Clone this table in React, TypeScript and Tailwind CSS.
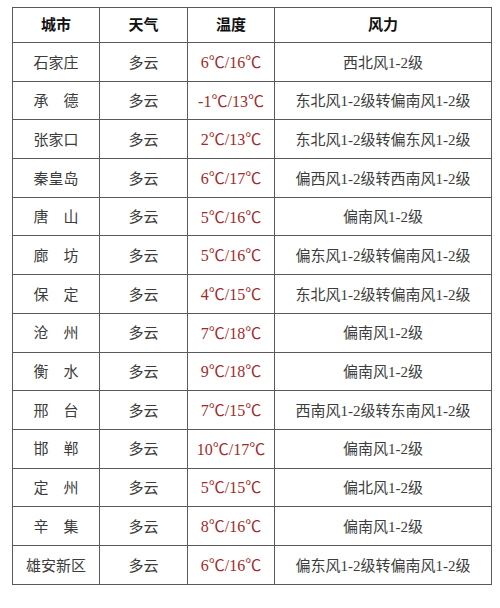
const rows = [
  ["石家庄", "6℃/16℃", "西北风1-2级"],
  ["承　德", "-1℃/13℃", "东北风1-2级转偏南风1-2级"],
  ["张家口", "2℃/13℃", "东北风1-2级转偏东风1-2级"],
  ["秦皇岛", "6℃/17℃", "偏西风1-2级转西南风1-2级"],
  ["唐　山", "5℃/16℃", "偏南风1-2级"],
  ["廊　坊", "5℃/16℃", "偏东风1-2级转偏南风1-2级"],
  ["保　定", "4℃/15℃", "东北风1-2级转偏南风1-2级"],
  ["沧　州", "7℃/18℃", "偏南风1-2级"],
  ["衡　水", "9℃/18℃", "偏南风1-2级"],
  ["邢　台", "7℃/15℃", "西南风1-2级转东南风1-2级"],
  ["邯　郸", "10℃/17℃", "偏南风1-2级"],
  ["定　州", "5℃/15℃", "偏北风1-2级"],
  ["辛　集", "8℃/16℃", "偏南风1-2级"],
  ["雄安新区", "6℃/16℃", "偏东风1-2级转偏南风1-2级"],
];

export default function App() {
  return (
    <div
      className="w-[500px] h-[608px] bg-white pt-[7px] pl-[12px]"
      style={{ fontFamily: '"Liberation Serif", "Noto Sans CJK SC", serif' }}
    >
      <table className="table-fixed border-collapse w-[479px] text-[15px] text-center">
        <colgroup>
          <col className="w-[87px]" />
          <col className="w-[88px]" />
          <col className="w-[87px]" />
          <col className="w-[217px]" />
        </colgroup>
        <thead>
          <tr className="h-[35px] font-bold text-[#111]">
            <th className="border border-[#5a5a5a] p-0">城市</th>
            <th className="border border-[#5a5a5a] p-0">天气</th>
            <th className="border border-[#5a5a5a] p-0">温度</th>
            <th className="border border-[#5a5a5a] p-0">风力</th>
          </tr>
        </thead>
        <tbody className="text-[#3c3c3c]">
          {rows.map(([city, temp, wind]) => (
            <tr key={city} className="h-[38.7px]">
              <td className="border border-[#5a5a5a] p-0 pt-[2px]">{city}</td>
              <td className="border border-[#5a5a5a] p-0 pt-[2px]">多云</td>
              <td className="border border-[#5a5a5a] p-0 pt-[2px] text-[#9e2b2e] text-[16px]">{temp}</td>
              <td className="border border-[#5a5a5a] p-0 pt-[2px]">{wind}</td>
            </tr>
          ))}
        </tbody>
      </table>
    </div>
  );
}
